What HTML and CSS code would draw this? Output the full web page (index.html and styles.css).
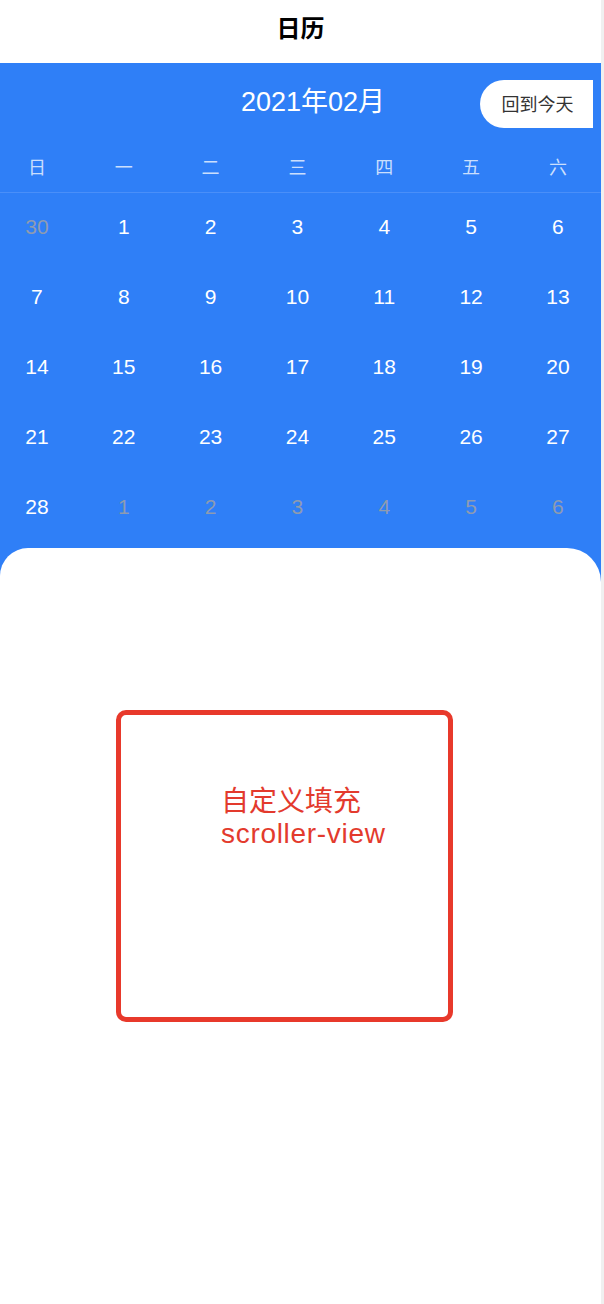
FILE: index.html
```html
<!DOCTYPE html>
<html lang="zh">
<head>
<meta charset="utf-8">
<title>日历</title>
<link rel="stylesheet" href="styles.css">
</head>
<body>
<div class="page">
  <header class="navbar"><h1 class="nav-title">日历</h1></header>
  <section class="calendar">
    <div class="cal-head">
      <div class="cal-month">2021年02月</div>
      <button class="today-btn">回到今天</button>
    </div>
    <div class="week">
      <span>日</span><span>一</span><span>二</span><span>三</span><span>四</span><span>五</span><span>六</span>
    </div>
    <div class="days">
      <span class="muted">30</span><span>1</span><span>2</span><span>3</span><span>4</span><span>5</span><span>6</span>
      <span>7</span><span>8</span><span>9</span><span>10</span><span>11</span><span>12</span><span>13</span>
      <span>14</span><span>15</span><span>16</span><span>17</span><span>18</span><span>19</span><span>20</span>
      <span>21</span><span>22</span><span>23</span><span>24</span><span>25</span><span>26</span><span>27</span>
      <span>28</span><span class="muted">1</span><span class="muted">2</span><span class="muted">3</span><span class="muted">4</span><span class="muted">5</span><span class="muted">6</span>
    </div>
  </section>
  <section class="sheet-wrap">
    <div class="sheet">
      <div class="custom-box">
        <p class="custom-text">自定义填充<br><span class="custom-latin">scroller-view</span></p>
      </div>
    </div>
  </section>
</div>
</body>
</html>
```

FILE: styles.css
```css
html, body {
  margin: 0;
  padding: 0;
}
body {
  background: #f0f0f0;
  font-family: "Liberation Sans", "Noto Sans CJK SC", sans-serif;
}
.page {
  width: 601px;
  height: 1304px;
  background: #fff;
  display: flex;
  flex-direction: column;
  overflow: hidden;
}
.navbar {
  height: 63px;
  background: #fff;
  display: flex;
  justify-content: center;
}
.nav-title {
  margin: 0;
  font-size: 24px;
  font-weight: bold;
  line-height: 54px;
  color: #000;
  font-family: "Noto Sans CJK SC", sans-serif;
}
.calendar {
  background: #2f7ff7;
  color: #fff;
  overflow: hidden;
}
.cal-head {
  height: 77px;
  display: flex;
  align-items: center;
  position: relative;
}
.cal-month {
  flex: 1;
  text-align: center;
  font-size: 27px;
  padding-left: 25px;
  margin-top: -4px;
  font-family: "Liberation Sans", "Noto Sans CJK SC", sans-serif;
}
.today-btn {
  position: absolute;
  right: 8px;
  top: 17px;
  width: 113px;
  height: 48px;
  border: none;
  border-radius: 24px 0 0 24px;
  background: #fff;
  color: #333;
  font-size: 18px;
  line-height: 46px;
  font-family: "Noto Sans CJK SC", sans-serif;
  padding: 0 0 2px 2px;
}
.week, .days {
  display: grid;
  grid-template-columns: repeat(7, 86.83px);
  width: 608px;
  margin-left: -6.5px;
  text-align: center;
}
.week {
  height: 52px;
  line-height: 52px;
  font-size: 18px;
  color: rgba(255, 255, 255, 0.75);
  font-family: "Noto Sans CJK SC", sans-serif;
  border-bottom: 1px solid #4a8ff9;
}
.days {
  grid-auto-rows: 70px;
  line-height: 68px;
  font-size: 21px;
  padding-bottom: 5px;
}
.days .muted {
  color: #8e9bb0;
}
.sheet-wrap {
  flex: 1;
  background: #2f7ff7;
  display: flex;
}
.sheet {
  flex: 1;
  background: #fff;
  border-radius: 28px 34px 0 0;
  padding: 162px 0 0 116px;
}
.custom-box {
  width: 327px;
  height: 302px;
  border: 5px solid #e8392b;
  border-radius: 10px;
}
.custom-text {
  margin: 0;
  padding: 71px 0 0 100px;
  font-size: 28px;
  line-height: 32px;
  color: #e33a2d;
  font-family: "Liberation Sans", "Noto Sans CJK SC", sans-serif;
}
.custom-latin {
  letter-spacing: 0.7px;
}
```
